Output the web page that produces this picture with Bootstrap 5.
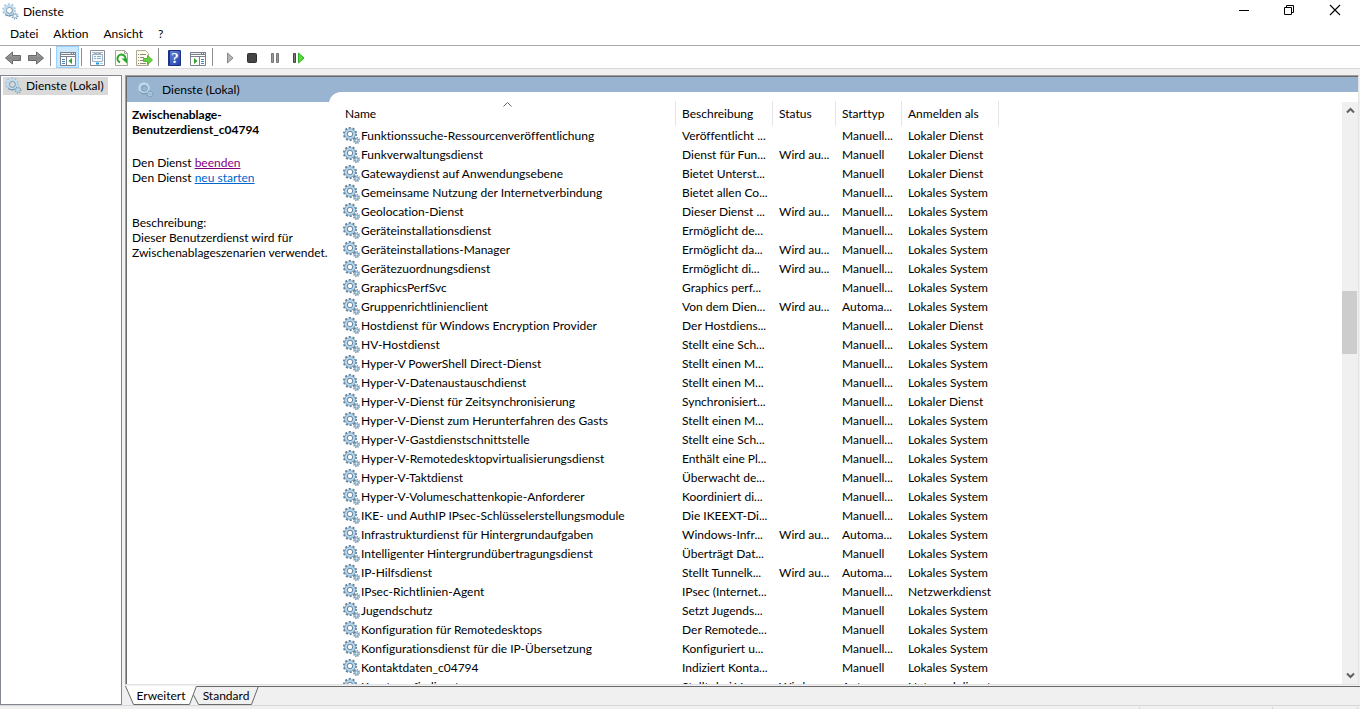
<!DOCTYPE html>
<html lang="de">
<head>
<meta charset="utf-8">
<meta name="viewport" content="width=device-width, initial-scale=1">
<title>Dienste</title>
<link rel="stylesheet" href="https://cdn.jsdelivr.net/npm/bootstrap@5.3.0/dist/css/bootstrap.min.css">
<style>
  :root { --face: #f0f0f0; --band: #99b4d1; --dark: #696969; --soft: #e3e3e3; }
  body { font-family: Lato, "Open Sans", sans-serif; font-size: 12px; line-height: 15px; color: #000; background: var(--face); font-variant-ligatures: none; }
  button { background: none; border: 0; padding: 0; color: inherit; }
  svg { display: block; flex: none; }
  .titlebar { height: 23px; padding-left: 2px; }
  .titlebar h1 { font-size: 12px; line-height: 15px; margin: 0 0 0 4px; font-weight: 400; }
  .winbtn { width: 45px; height: 21px; }
  .menubar { height: 22px; padding: 0 0 2px 3px; }
  .menubar button { padding: 0 8px 0 7px; }
  .toolbar { height: 24px; border-top: 1px solid #a9a9ad; border-bottom: 1px solid #d9d9d9; padding: 0 2px; }
  .tool { width: 23px; height: 22px; }
  .tool.active { background: #cce8ff; outline: 1px solid #99d1ff; outline-offset: -1px; }
  .rule { width: 1px; height: 18px; background: #8d8d8d; margin: 0 5px 0 2px; }
  .workspace { padding-top: 6px; gap: 3px; }
  .tree { width: 122px; border: 1px solid #828790; padding: 1px 2px; }
  .tree a { display: inline-flex; height: 18px; padding: 0 4px 2px 2px; background: #d9d9d9; color: #000; text-decoration: none; gap: 4px; }
  .pane { background: var(--band); border: 1px solid #a0a0a0; border-right-color: var(--soft); border-bottom-color: var(--soft); box-shadow: inset 1px 1px var(--dark); padding: 1px 0 0 1px; margin: 0 1px 1px 0; }
  .info { width: 202px; }
  .infohead { height: 25px; padding-left: 10px; gap: 8px; }
  .infobody { padding: 5px 2px 0 5px; }
  .infobody h2 { font-size: 12px; line-height: 15px; font-weight: 700; margin: 0 0 18px; }
  .infobody p { margin: 0 0 30px; }
  .infobody a { color: #0066cc; }
  .infobody a.seen { color: #800080; }
  .listing { margin-top: 15px; padding: 9px 0 0 10px; border-top-left-radius: 12px; }
  .services { width: 660px; table-layout: fixed; border-collapse: separate; border-spacing: 0; }
  .services th { height: 25px; padding: 0 6px; font-weight: 400; border-right: 1px solid #e5e5e5; position: relative; }
  .services td { height: 19px; padding: 0 0 0 6px; white-space: nowrap; overflow: hidden; }
  .services td:first-child { padding-left: 4px; }
  .svc { gap: 1px; height: 19px; }
  .sorted { position: absolute; top: 1px; left: 50%; margin-left: -4px; }
  .c-name { width: 337px; } .c-desc { width: 97px; } .c-state { width: 63px; } .c-start { width: 66px; } .c-logon { width: 97px; }
  .vscroll { width: 16px; background: var(--face); margin-top: 1px; }
  .vscroll button { height: 17px; }
  .vscroll button svg { margin: auto; }
  .above { flex: 172 0 0; } .thumb { flex: 63 0 0; background: #cdcdcd; margin-right: 1px; } .below { flex: 313 0 0; }
  .tabstrip { height: 19px; border-top: 1px solid var(--dark); }
  .sheet { position: relative; height: 19px; margin-top: -1px; }
  .sheet svg { position: absolute; inset: 0; }
  .sheet span { position: relative; }
  .sheet-a { width: 72px; z-index: 1; }
  .sheet-b { width: 66px; margin-left: -4px; }
  .statusbar { height: 4px; border-top: 1px solid #d7d7d7; padding: 1px 2px 0 0; }
  .statusbar div { border-right: 1px solid #d7d7d7; }
  .s1 { width: 133px; } .s2 { width: 85px; }
</style>
</head>
<body class="vh-100 d-flex flex-column overflow-hidden">

<svg width="0" height="0" class="position-absolute" aria-hidden="true">
  <defs>
    <linearGradient id="metal" x1="0" y1="0" x2="0" y2="1"><stop offset="0" stop-color="#b9b9b9"/><stop offset=".5" stop-color="#858585"/><stop offset="1" stop-color="#a8a8a8"/></linearGradient>
    <linearGradient id="blue" x1="0" y1="0" x2="1" y2="1"><stop offset="0" stop-color="#6a86dc"/><stop offset="1" stop-color="#1d3fa8"/></linearGradient>
    <symbol id="gear" viewBox="0 0 17 17">
      <circle cx="7" cy="7" r="6.1" fill="none" stroke="#5f7f99" stroke-width="1.9" stroke-dasharray="2 1.83"/>
      <circle cx="7" cy="7" r="4.4" fill="#fff" stroke="#7898b2" stroke-width="2.8"/>
      <circle cx="7" cy="7" r="4.1" fill="none" stroke="#b4d7ed" stroke-width="2"/>
      <circle cx="7" cy="7" r="2.7" fill="none" stroke="#5d7b94" stroke-width=".9"/>
      <circle cx="13.500" cy="13.500" r="2.700" fill="none" stroke="#5f7f99" stroke-width="1.600" stroke-dasharray="1.1 1"/>
      <circle cx="13.500" cy="13.500" r="1.600" fill="#e8f3fa" stroke="#86abc6" stroke-width="1.400"/>
    </symbol>
    <symbol id="gearlight" viewBox="0 0 17 17">
      <circle cx="7" cy="7" r="6" fill="none" stroke="#a0bfd6" stroke-width="1.6" stroke-dasharray="1.9 1.87"/>
      <circle cx="7" cy="7" r="4.2" fill="none" stroke="#bfdcee" stroke-width="2.6"/>
      <circle cx="7.4" cy="7.4" r="3" fill="none" stroke="#7391ab" stroke-width=".9"/>
      <path d="M3 10.500a5.400 5.400 0 0 0 7 1.500" fill="none" stroke="#6b89a3"/>
      <circle cx="13" cy="13" r="2.8" fill="none" stroke="#7998b2" stroke-width="1.5" stroke-dasharray="1.1 1.1"/>
      <circle cx="13" cy="13" r="1.7" fill="none" stroke="#a5c8de" stroke-width="1.3"/>
    </symbol>
  </defs>
</svg>

<header class="bg-white">
  <div class="titlebar d-flex align-items-center">
    <svg width="17" height="17"><use href="#gearlight"/></svg>
    <h1>Dienste</h1>
    <div class="ms-auto d-flex align-self-start">
      <button class="winbtn" aria-label="Minimieren"><svg width="45" height="21"><path d="M18 10.500h10" stroke="#000"/></svg></button>
      <button class="winbtn" aria-label="Verkleinern"><svg width="45" height="21"><path d="M18.500 7.500h7v7h-7zM20.500 7v-1.500h7v7h-1.500" fill="none" stroke="#000"/></svg></button>
      <button class="winbtn me-1" aria-label="Schließen"><svg width="45" height="21"><path d="M19 5l10 10M29 5l-10 10" stroke="#000" stroke-width="1.100"/></svg></button>
    </div>
  </div>
  <nav class="menubar d-flex align-items-center" aria-label="Menü">
    <button>Datei</button><button>Aktion</button><button>Ansicht</button><button>?</button>
  </nav>
  <div class="toolbar d-flex align-items-center" role="toolbar" aria-label="Werkzeuge">
    <button class="tool" aria-label="Zurück"><svg width="23" height="22"><path d="M3.500 12l7-6v3.500h8v5h-8v3.500z" fill="url(#metal)" stroke="#666"/></svg></button>
    <button class="tool" aria-label="Vorwärts"><svg width="23" height="22"><path d="M18.500 12l-7-6v3.500h-8v5h8v3.500z" fill="url(#metal)" stroke="#666"/></svg></button>
    <span class="rule"></span>
    <button class="tool active" aria-label="Konsolenstruktur anzeigen"><svg width="23" height="22"><path d="M4.500 6.500h15v13h-15z" fill="#fff" stroke="#7a828b"/><path d="M4 6h16v3H4z" fill="#7a828b"/><path d="M5 7.500h10M16 7.500h1M18 7.500h1" stroke="#e8edf2"/><path d="M4 10.500h16M10.500 11v8" stroke="#7a828b"/><path d="M6 13.500h3M6 15.500h3M6 17.500h3" stroke="#4b86c4"/><path d="M16 12v6l-3.500-3z" fill="#2ea22e"/></svg></button>
    <span class="rule"></span>
    <button class="tool" aria-label="Eigenschaften"><svg width="23" height="22"><path d="M3.500 4.500h14v15h-14z" fill="#fff" stroke="#858c94"/><path d="M5 6.500h11" stroke="#b3bdc7"/><path d="M5.500 8.500h10v7h-10zM7 8.500v-1h3v1M11 8.500v-1h3" fill="#f4f9fd" stroke="#9db1c3"/><path d="M7 10.500h2M10 10.500h4M7 12.500h2M10 12.500h4" stroke="#8fb0cd"/><path d="M9 17.500h3" stroke="#1f9ae0" stroke-width="2"/><path d="M13 17.500h3" stroke="#a9cde4"/></svg></button>
    <button class="tool" aria-label="Aktualisieren"><svg width="23" height="22"><path d="M5.500 4.500h9l3 3v12h-12z" fill="#fffef4" stroke="#a5a59b"/><path d="M14.500 4.500v3h3" fill="none" stroke="#a5a59b"/><path d="M10 16.300a4 4 0 1 1 5.400-3" fill="none" stroke="#28a531" stroke-width="2"/><path d="M11.500 12.500h5.500v5z" fill="#28a531"/></svg></button>
    <button class="tool" aria-label="Liste exportieren"><svg width="23" height="22"><path d="M3.500 4.500h9l3 3v12h-12z" fill="#fffbe6" stroke="#b0aa94"/><path d="M5 8.500h1M7 8.500h6M5 11.500h1M7 11.500h4M5 14.500h1M7 14.500h4M5 17.500h1M7 17.500h6" stroke="#888"/><path d="M10.500 12.500h4v-3l5 4.500-5 4.500v-3h-4z" fill="#66d045" stroke="#4db52f"/></svg></button>
    <span class="rule"></span>
    <button class="tool" aria-label="Hilfe"><svg width="23" height="22"><path d="M4.500 4.500h12v15h-12z" fill="url(#blue)" stroke="#1b3188"/><path d="M5.500 5v14" stroke="#1b3188"/><text x="11" y="17" text-anchor="middle" font-family="Liberation Serif, serif" font-size="15" font-weight="700" fill="#fff">?</text></svg></button>
    <button class="tool" aria-label="Aktionsbereich anzeigen"><svg width="23" height="22"><path d="M3.500 6.500h15v13h-15z" fill="#fff" stroke="#7a828b"/><path d="M3 6h16v3H3z" fill="#7a828b"/><path d="M4 7.500h10M15 7.500h1M17 7.500h1" stroke="#e8edf2"/><path d="M3 10.500h16M12.500 11v8" stroke="#7a828b"/><path d="M14 13.500h3M14 15.500h3M14 17.500h3" stroke="#4b86c4"/><path d="M7 12v6l3.500-3z" fill="#2ea22e"/></svg></button>
    <span class="rule"></span>
    <button class="tool" aria-label="Dienst starten"><svg width="23" height="22"><path d="M9.500 7l5.500 5-5.500 5z" fill="#b5b5b5" stroke="#888"/></svg></button>
    <button class="tool" aria-label="Dienst beenden"><svg width="23" height="22"><rect x="6.500" y="7.500" width="9" height="9" rx="1" fill="#454545" stroke="#303030"/></svg></button>
    <button class="tool" aria-label="Dienst anhalten"><svg width="23" height="22"><path d="M7.500 7.500h2v9h-2zM12.500 7.500h2v9h-2z" fill="#999" stroke="#777"/></svg></button>
    <button class="tool" aria-label="Dienst neu starten"><svg width="23" height="22"><path d="M6.500 7.500h2v9h-2z" fill="#777" stroke="#444"/><path d="M11.500 7l5.500 5-5.500 5z" fill="#55dd38" stroke="#2fb023"/></svg></button>
  </div>
</header>

<main class="workspace d-flex flex-grow-1 overflow-hidden">
  <nav class="tree bg-white flex-shrink-0" aria-label="Konsolenstruktur">
    <a href="#" class="align-items-center"><svg width="17" height="17"><use href="#gearlight"/></svg><span>Dienste (Lokal)</span></a>
  </nav>

  <div class="d-flex flex-column flex-grow-1 overflow-hidden">
    <section class="pane d-flex flex-grow-1 overflow-hidden">
      <div class="info d-flex flex-column flex-shrink-0">
        <div class="infohead d-flex align-items-center"><svg width="17" height="17"><use href="#gearlight"/></svg><span>Dienste (Lokal)</span></div>
        <div class="infobody bg-white flex-grow-1">
          <h2>Zwischenablage-<br>Benutzerdienst_c04794</h2>
          <p>Den Dienst <a href="#" class="seen">beenden</a><br>Den Dienst <a href="#">neu starten</a></p>
          <p>Beschreibung:<br>Dieser Benutzerdienst wird für<br><span class="text-nowrap">Zwischenablageszenarien verwendet.</span></p>
        </div>
      </div>
      <div class="listing bg-white d-flex flex-grow-1 overflow-hidden">
        <div class="flex-grow-1 overflow-hidden">
          <table class="services">
            <colgroup><col class="c-name"><col class="c-desc"><col class="c-state"><col class="c-start"><col class="c-logon"></colgroup>
            <thead><tr>
              <th scope="col">Name<svg class="sorted" width="9" height="5"><path d="M.5 4.500l4-4 4 4" fill="none" stroke="#666"/></svg></th>
              <th scope="col">Beschreibung</th><th scope="col">Status</th><th scope="col">Starttyp</th><th scope="col">Anmelden als</th>
            </tr></thead>
            <tbody id="rows"></tbody>
          </table>
        </div>
        <div class="vscroll d-flex flex-column flex-shrink-0">
          <button aria-label="Nach oben"><svg width="9" height="7"><path d="M1 5.500L4.500 2 8 5.500" fill="none" stroke="#606060" stroke-width="2"/></svg></button>
          <div class="above"></div><div class="thumb"></div><div class="below"></div>
          <button aria-label="Nach unten"><svg width="9" height="7"><path d="M1 1.500L4.500 5 8 1.500" fill="none" stroke="#606060" stroke-width="2"/></svg></button>
        </div>
      </div>
    </section>
    <div class="tabstrip d-flex" role="tablist">
      <button class="sheet sheet-a" role="tab" aria-selected="true"><svg width="72" height="19"><path d="M0 0l8.500 18.500h56L72 0z" fill="#fff"/><path d="M.5 0l8 18.500h56L71.500 0" fill="none" stroke="#696969"/></svg><span>Erweitert</span></button>
      <button class="sheet sheet-b" role="tab" aria-selected="false"><svg width="66" height="19"><path d="M.5 9l5 9.500h53L65.500 0" fill="none" stroke="#696969"/></svg><span>Standard</span></button>
    </div>
  </div>
</main>

<footer class="statusbar d-flex">
  <div class="flex-grow-1"></div><div class="s1"></div><div class="s2"></div>
</footer>

<script>
  // Name | Beschreibung | Status | Starttyp | Anmelden als
  const services = `Funktionssuche-Ressourcenveröffentlichung|Veröffentlicht ...||Manuell...|Lokaler Dienst
Funkverwaltungsdienst|Dienst für Fun...|Wird au...|Manuell|Lokaler Dienst
Gatewaydienst auf Anwendungsebene|Bietet Unterst...||Manuell|Lokaler Dienst
Gemeinsame Nutzung der Internetverbindung|Bietet allen Co...||Manuell...|Lokales System
Geolocation-Dienst|Dieser Dienst ...|Wird au...|Manuell...|Lokales System
Geräteinstallationsdienst|Ermöglicht de...||Manuell...|Lokales System
Geräteinstallations-Manager|Ermöglicht da...|Wird au...|Manuell...|Lokales System
Gerätezuordnungsdienst|Ermöglicht di...|Wird au...|Manuell...|Lokales System
GraphicsPerfSvc|Graphics perf...||Manuell...|Lokales System
Gruppenrichtlinienclient|Von dem Dien...|Wird au...|Automa...|Lokales System
Hostdienst für Windows Encryption Provider|Der Hostdiens...||Manuell...|Lokaler Dienst
HV-Hostdienst|Stellt eine Sch...||Manuell...|Lokales System
Hyper-V PowerShell Direct-Dienst|Stellt einen M...||Manuell...|Lokales System
Hyper-V-Datenaustauschdienst|Stellt einen M...||Manuell...|Lokales System
Hyper-V-Dienst für Zeitsynchronisierung|Synchronisiert...||Manuell...|Lokaler Dienst
Hyper-V-Dienst zum Herunterfahren des Gasts|Stellt einen M...||Manuell...|Lokales System
Hyper-V-Gastdienstschnittstelle|Stellt eine Sch...||Manuell...|Lokales System
Hyper-V-Remotedesktopvirtualisierungsdienst|Enthält eine Pl...||Manuell...|Lokales System
Hyper-V-Taktdienst|Überwacht de...||Manuell...|Lokales System
Hyper-V-Volumeschattenkopie-Anforderer|Koordiniert di...||Manuell...|Lokales System
IKE- und AuthIP IPsec-Schlüsselerstellungsmodule|Die IKEEXT-Di...||Manuell...|Lokales System
Infrastrukturdienst für Hintergrundaufgaben|Windows-Infr...|Wird au...|Automa...|Lokales System
Intelligenter Hintergrundübertragungsdienst|Überträgt Dat...||Manuell|Lokales System
IP-Hilfsdienst|Stellt Tunnelk...|Wird au...|Automa...|Lokales System
IPsec-Richtlinien-Agent|IPsec (Internet...||Manuell...|Netzwerkdienst
Jugendschutz|Setzt Jugends...||Manuell|Lokales System
Konfiguration für Remotedesktops|Der Remotede...||Manuell|Lokales System
Konfigurationsdienst für die IP-Übersetzung|Konfiguriert u...||Manuell...|Lokales System
Kontaktdaten_c04794|Indiziert Konta...||Manuell|Lokales System
Kryptografiedienste|Stellt drei Ver...|Wird au...|Automa...|Netzwerkdienst`.split("\n").map(line => line.split("|"));
  document.getElementById("rows").innerHTML = services.map(([name, ...rest]) =>
    `<tr><td><div class="svc d-flex align-items-center"><svg width="17" height="17"><use href="#gear"/></svg><span>${name}</span></div></td>` +
    rest.map(cell => `<td>${cell}</td>`).join("") + "</tr>").join("");
</script>
<script src="https://cdn.jsdelivr.net/npm/bootstrap@5.3.0/dist/js/bootstrap.bundle.min.js"></script>
</body>
</html>
